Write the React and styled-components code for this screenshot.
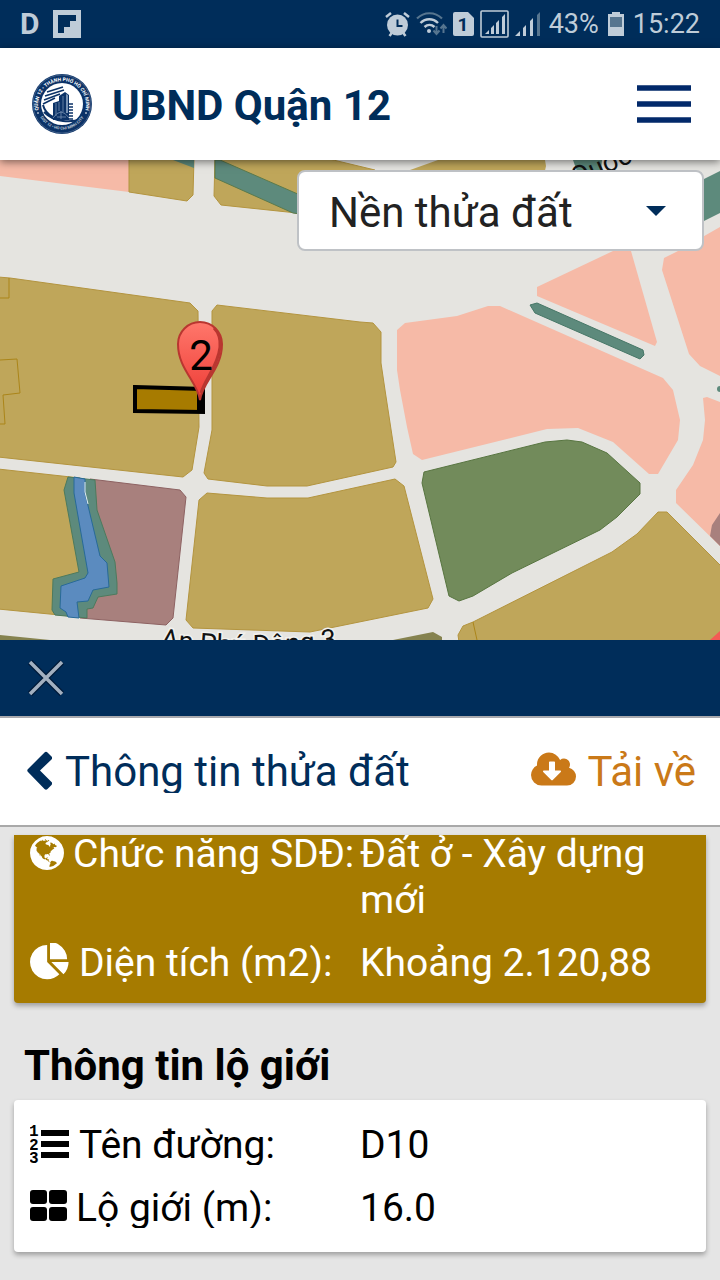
import { useState } from 'react';
import styled, { createGlobalStyle } from 'styled-components';

const GlobalStyle = createGlobalStyle`
  *,
  *::before,
  *::after {
    box-sizing: border-box;
  }
  body {
    margin: 0;
    background: #e5e5e5;
    font-family: Roboto, 'Liberation Sans', sans-serif;
    color: #000;
  }
  button,
  select {
    font: inherit;
    color: inherit;
  }
  svg {
    display: block;
    flex: none;
  }
`;

const Page = styled.div`
  display: flex;
  flex-direction: column;
  min-height: 100vh;
`;

const StatusBar = styled.div`
  display: flex;
  align-items: center;
  justify-content: space-between;
  height: 48px;
  padding: 0 20px;
  background: #002d5a;
  color: #bfccd8;
  font-size: 27px;
  line-height: 48px;
`;

const StatusGroup = styled.div`
  display: flex;
  align-items: center;
  gap: ${({ $gap }) => $gap}px;
`;

const Carrier = styled.span`
  font-size: 30px;
  font-weight: 700;
`;

const Header = styled.header`
  position: relative;
  z-index: 2;
  display: flex;
  align-items: center;
  gap: 20px;
  height: 112px;
  padding: 0 24px 0 32px;
  background: #fff;
  box-shadow: 0 2px 8px rgba(0, 0, 0, 0.5);
`;

const Brand = styled.h1`
  flex: 1;
  margin: 0;
  padding-top: 2px;
  color: #002d5a;
  font-size: 42px;
  font-weight: 700;
`;

const IconButton = styled.button`
  display: flex;
  padding: 0;
  border: 0;
  background: none;
  cursor: pointer;
`;

const MapArea = styled.section`
  position: relative;
  height: 480px;
  overflow: hidden;
  background: #e5e4e0;

  > svg {
    width: 100%;
    height: 100%;
  }
`;

const LayerPicker = styled.label`
  position: absolute;
  top: 10px;
  right: 16px;
  width: 407px;
  max-width: 90%;

  svg {
    position: absolute;
    top: 36px;
    right: 38px;
    pointer-events: none;
  }
`;

const LayerSelect = styled.select`
  appearance: none;
  display: block;
  width: 100%;
  height: 81px;
  padding: 4px 64px 0 30px;
  border: 2px solid #bfc2c6;
  border-radius: 8px;
  background: #fff;
  color: #222;
  font-size: 42px;
`;

const CloseBar = styled.div`
  display: flex;
  align-items: center;
  height: 76px;
  padding: 0 28px;
  background: #002d5a;
`;

const TitleBar = styled.div`
  display: flex;
  align-items: center;
  justify-content: space-between;
  height: 111px;
  padding: 0 24px 0 27px;
  border-top: 2px solid #a9a9ad;
  border-bottom: 2px solid #a9a9a9;
  background: #fff;
`;

const BarButton = styled.button`
  display: flex;
  align-items: center;
  gap: ${({ $gap }) => $gap}px;
  padding: 0;
  border: 0;
  background: none;
  color: ${({ $color }) => $color};
  font-size: 42px;
  line-height: 42px;
  cursor: pointer;
  overflow: hidden;
`;

const Clip = styled.span`
  overflow: hidden;
`;

const Details = styled.main`
  padding: 8px 14px 28px;
`;

const Card = styled.dl`
  margin: 0;
  padding: ${({ $scrolled }) => ($scrolled ? '0 16px 17px' : '22px 16px 21px')};
  border-radius: ${({ $scrolled }) => ($scrolled ? '0 0 4px 4px' : '4px')};
  background: ${({ $scrolled }) => ($scrolled ? '#a67b00' : '#fff')};
  color: ${({ $scrolled }) => ($scrolled ? '#fff' : '#000')};
  box-shadow: 0 3px 5px rgba(0, 0, 0, 0.3);
  overflow: hidden;
`;

const Rows = styled.div`
  display: flex;
  flex-direction: column;
  gap: 17px;
  margin-top: ${({ $offset }) => $offset || 0}px;
`;

const Row = styled.div`
  display: grid;
  grid-template-columns: 330px 1fr;
  align-items: start;
  font-size: 39px;
  line-height: 46px;
`;

const Label = styled.dt`
  display: flex;
  gap: 9px;
  margin-top: 3px;
  line-height: 40px;
  white-space: nowrap;
  overflow: hidden;
`;

const Value = styled.dd`
  margin: 0;
`;

const SectionTitle = styled.h2`
  margin: 38px 0 10px;
  padding-left: 10px;
  font-size: 42px;
  font-weight: 700;
  line-height: 49px;
`;

const FlipIcon = () => (
  <svg width="28" height="28" viewBox="0 0 28 28" aria-hidden="true">
    <path fill="#bfccd8" fillRule="evenodd" d="M0 0h28v28H0zM5 5v18h6v-6h6v-6h6V5z" />
  </svg>
);

const AlarmIcon = () => (
  <svg width="25" height="25" viewBox="0 0 25 25" aria-hidden="true">
    <circle cx="12.500" cy="13" r="10.500" fill="#bfccd8" />
    <path d="M1 5l5-4M24 5l-5-4M4.500 24l3-4M20.500 24l-3-4" stroke="#bfccd8" strokeWidth="2.500" fill="none" />
    <path d="M12.500 7.500v6.500h5" stroke="#002d5a" strokeWidth="2" fill="none" />
  </svg>
);

const WifiIcon = () => (
  <svg width="31" height="24" viewBox="0 0 31 24" fill="none" aria-hidden="true">
    <path d="M1 6.500C8-.5 19-.5 26 6.500" stroke="#56758f" strokeWidth="2.200" />
    <path d="M4.500 11c5-5 12.500-5 17.500 0M8.500 15c3-2.800 7-2.800 10 0" stroke="#bfccd8" strokeWidth="2.400" />
    <circle cx="13" cy="19" r="2" fill="#bfccd8" />
    <path d="M20.500 14v8M17.500 18.500l3 3.500 3-3.500M27.500 21v-8M24.500 16.500l3-3.500 3 3.500" stroke="#56758f" strokeWidth="2" />
  </svg>
);

const SimIcon = () => (
  <svg width="21" height="24" viewBox="0 0 21 24" aria-hidden="true">
    <path fill="#bfccd8" d="M2 0h13l6 6v16q0 2-2 2H2q-2 0-2-2V2q0-2 2-2z" />
    <text x="10" y="19" textAnchor="middle" fontFamily="Roboto" fontWeight="700" fontSize="19" fill="#002d5a">1</text>
  </svg>
);

const SignalBoxIcon = () => (
  <svg width="29" height="28" viewBox="0 0 29 28" aria-hidden="true">
    <rect x="1" y="1" width="27" height="26" rx="1" fill="none" stroke="#bfccd8" strokeWidth="1.600" />
    <path fill="#bfccd8" d="M5 24l4-4v4zM11 18l3-3v9h-3zM16 13l3-3v14h-3zM22 7l3-3v20h-3z" />
  </svg>
);

const SignalIcon = () => (
  <svg width="25" height="24" viewBox="0 0 25 24" aria-hidden="true">
    <path fill="#bfccd8" d="M0 24l5-5v5zM8 16l3-3v11H8zM15 9l3-3v18h-3z" />
    <path fill="#56758f" d="M22 3l3-3v24h-3z" />
  </svg>
);

const BatteryIcon = () => (
  <svg width="16" height="24" viewBox="0 0 16 24" aria-hidden="true">
    <path fill="#bfccd8" d="M4 0h8v2h4v22H0V2h4z" />
    <path fill="#56758f" d="M2 5h12v10H2z" />
  </svg>
);

const Seal = () => (
  <svg width="60" height="60" viewBox="0 0 60 60" role="img" aria-label="Quận 12">
    <defs>
      <path id="seal-top" d="M7 38A24 24 0 1 1 53 38" />
      <path id="seal-bottom" d="M8 43A25.500 25.500 0 0 0 52 43" />
    </defs>
    <circle cx="30" cy="30" r="30" fill="#0b3267" />
    <circle cx="30" cy="30" r="29" fill="none" stroke="#7189a7" strokeWidth="0.500" />
    <circle cx="30" cy="30" r="21" fill="#fff" />
    <g fill="none" stroke="#0b3267">
      <path d="M15 18l16-5M13 22l19-6M12 26l16-6M11 30l12-6" strokeWidth="1.600" />
      <path d="M12 38q8 8 19 9t18-2" strokeWidth="2" />
      <path d="M11 31q2 8 10 12" strokeWidth="2" />
    </g>
    <path fill="#0b3267" d="M21 29l6-2v-5l6-4 4 3v25H21z" />
    <path fill="#7893b4" d="M34 20l2 1v18h-2z" />
    <path stroke="#0b3267" strokeWidth="1.500" d="M36 30h5M36 33h5M36 36h5M36 39h5M36 42h5M36 45h5" />
    <path stroke="#7893b4" strokeWidth="0.800" fill="none" d="M24 29v13M27 28v9M31 22v16M21 44q8-12 16 0M29 37v8M25 43h9" />
    <g fill="#fff" fontFamily="Roboto" fontWeight="700">
      <text fontSize="5">
        <textPath href="#seal-top" startOffset="50%" textAnchor="middle">QUẬN 12 • THÀNH PHỐ HỒ CHÍ MINH</textPath>
      </text>
      <text fontSize="4" fill="#b9c6d5">
        <textPath href="#seal-bottom" startOffset="50%" textAnchor="middle">DIST 12 • HO CHI MINH CITY</textPath>
      </text>
    </g>
    <path stroke="#fff" strokeWidth="1" d="M5 39h2M53 39h2" />
  </svg>
);

const MenuIcon = () => (
  <svg width="64" height="40" viewBox="0 0 64 40" aria-hidden="true">
    <path d="M5 4h54M5 20h54M5 36h54" stroke="#02296a" strokeWidth="5.500" />
  </svg>
);

const CloseIcon = () => (
  <svg width="36" height="36" viewBox="0 0 36 36" aria-hidden="true">
    <path d="M2 2l32 32M34 2L2 34" stroke="#001a38" strokeWidth="6" />
    <path d="M2 2l32 32M34 2L2 34" stroke="#a3b0c0" strokeWidth="3.500" />
  </svg>
);

const BackIcon = () => (
  <svg width="25" height="42" viewBox="0 0 25 42" fill="currentColor" aria-hidden="true">
    <path d="M1 18L17.500 1.500q1.500-1.500 3 0l4 4q1.500 1.500 0 3L13 19.500l11.500 11.500q1.500 1.500 0 3l-4 4q-1.500 1.500-3 0L1 21q-1.500-1.500 0-3z" />
  </svg>
);

const DownloadIcon = () => (
  <svg width="45" height="42" viewBox="-64 60 1920 1792" fill="currentColor" aria-hidden="true">
    <path d="M1216 928q0-14-9-23t-23-9h-224v-352q0-13-9.500-22.500t-22.500-9.500h-192q-13 0-22.500 9.500t-9.500 22.500v352h-224q-13 0-22.500 9.500t-9.500 22.500q0 14 9 23l352 352q9 9 23 9t23-9l351-351q10-12 10-24zm640 224q0 159-112.500 271.500t-271.500 112.500h-1088q-185 0-316.500-131.500t-131.500-316.500q0-130 70-240t188-165q-2-30-2-43 0-212 150-362t362-150q156 0 285.500 87t188.500 231q71-62 166-62 106 0 181 75t75 181q0 76-41 138 130 31 213.500 135.500t83.500 238.500z" />
  </svg>
);

const GlobeIcon = () => (
  <svg width="34" height="40" viewBox="128 40 1536 1792" fill="currentColor" aria-hidden="true">
    <path d="M896 128q209 0 385.500 103t279.500 279.500 103 385.500-103 385.500-279.500 279.500-385.500 103-385.500-103-279.500-279.500-103-385.500 103-385.500 279.500-279.500 385.500-103zm274 521q-2 1-9.500 9.500t-13.500 9.500q2 0 4.500-5t5-11 3.500-7q6-7 22-15 14-6 52-12 34-8 51 11-2-2 9.500-13t14.500-12q3-2 15-4.500t15-7.500l2-22q-12 1-17.500-7t-6.500-21q0 2-6 8 0-7-4.500-8t-11.500 1-9 1q-10-3-15-7.500t-8-16.500-4-15q-2-5-9.500-11t-9.500-10q-1-2-2.500-5.500t-3-6.500-4-5.500-5.500-2.500-7 5-7.500 10-4.500 5q-3-2-6-1.500t-4.500 1-4.500 3-5 3.500q-3 2-8.500 3t-8.500 2q15-5-1-11-10-4-16-3 9-4 7.500-12t-8.500-14h5q-1-4-8.500-8.500t-17.500-8.500-13-6q-8-5-34-9.500t-33-.5q-5 6-4.500 10.500t4 14 3.500 12.500q1 6-5.500 13t-6.500 12q0 7 14 15.500t10 21.500q-3 8-16 16t-16 12q-5 8-1.500 18.500t10.500 16.500q2 2 1.500 4t-3.500 4.500-5.500 4-6.500 3.500l-3 2q-11 5-20.500-6t-13.500-26q-7-25-16-30-23-8-29 1-5-13-41-26-25-9-58-4 6-1 0-15-7-15-19-12 3-6 4-17.500t1-13.500q3-13 12-23 1-1 7-8.500t9.500-13.500.5-6q35 4 50-11 5-5 11.500-17t10.500-17q9-6 14-5.500t14.500 5.500 14.500 5q14 1 15.500-11t-7.500-20q12 1 3-17-4-7-8-9-12-4-27 5-8 4 2 8-1-1-9.500 10.500t-16.500 17.500-16-5q-1-1-5.500-13.500t-9.500-13.500q-8 0-16 15 3-8-11-15t-24-8q19-12-8-27-7-4-20.500-5t-19.500 4q-5 7-5.500 11.500t5 8 10.500 5.500 11.500 4 8.500 3q14 10 8 14-2 1-8.500 3.500t-11.500 4.500-6 4q-3 4 0 14t-2 14q-5-5-9-17.500t-7-16.500q7 9-25 6l-10-1q-4 0-16 2t-20.500 1-13.500-8q-4-8 0-20 1-4 4-2-4-3-11-9.500t-10-8.500q-46 15-94 41 6 1 12-1 5-2 13-6.500t10-5.500q34-14 42-7l5-5q14 16 20 25-7-4-30-1-20 6-22 12 7 12 5 18-4-3-11.500-10t-14.500-11-15-5q-16 0-22 1-146 80-235 222 7 7 12 8 4 1 5 9t2.500 11 11.500-3q9 8 3 19 1-1 44 27 19 17 21 21 3 11-10 18-1-2-9-9t-9-4q-3 5 .5 18.500t10.500 12.500q-7 0-9.500 16t-2.500 35.500-1 23.500l2 1q-3 12 5.500 34.500t21.500 19.500q-13 3 20 43 6 8 8 9 3 2 12 7.500t15 10 10 10.500q4 5 10 22.500t14 23.500q-2 6 9.500 20t10.500 23q-1 0-2.500 1t-2.500 1q3 7 15.500 14t15.500 13q1 3 2 10t3 11 8 2q2-20-24-62-15-25-17-29-3-5-5.500-15.500t-4.500-14.500q2 0 6 1.500t8.500 3.500 7.500 4 2 3q-3 7 2 17.500t12 18.500 17 19 12 13q6 6 14 19.500t0 13.500q9 0 20 10.500t17 19.500q5 8 8 26t5 24q2 7 8.500 13.500t12.500 9.500l16 8 13 7q5 2 18.500 10.500t21.500 11.500q10 4 16 4t14.500-2.500 13.500-3.500q15-2 29 15t21 21q36 19 55 11-2 1 .5 7.500t8 15.500 9 14.500 5.500 8.500q5 6 18 15t18 15q6-4 7-9-3 8 7 20t18 10q14-3 14-32-31 15-49-18 0-1-2.500-5.500t-4-8.500-2.500-8.500 0-7.500 5-3q9 0 10-3.500t-2-12.500-4-13q-1-8-11-20t-12-15q-5 9-16 8t-16-9q0 1-1.500 5.500t-1.500 6.500q-13 0-15-1 1-3 2.500-17.500t3.500-22.500q1-4 5.500-12t7.500-14.500 4-12.500-4.500-9.500-17.500-2.500q-19 1-26 20-1 3-3 10.500t-5 11.500-9 7q-7 3-24 2t-24-5q-13-8-22.500-29t-9.500-37q0-10 2.500-26.500t3-25-5.500-24.500q3-2 9-9.500t10-10.500q2-1 4.500-1.500t4.500 0 4-1.500 3-6q-1-1-4-3-3-3-4-3 7 3 28.500-1.500t27.500 1.500q15 11 22-2 0-1-2.500-9.500t-.5-13.500q5 27 29 9 3 3 15.500 5t17.500 5q3 2 7 5.500t5.500 4.500 5-.5 8.500-6.500q10 14 12 24 11 40 19 44 7 3 11 2t4.500-9.500 0-14-1.500-12.500l-1-8v-18l-1-8q-15-3-18.500-12t1.500-18.500 15-18.500q1-1 8-3.500t15.500-6.500 12.500-8q21-19 15-35 7 0 11-9-1 0-5-3t-7.500-5-4.500-2q9-5 2-16 5-3 7.500-11t7.500-10q9 12 21 2 7-8 1-16 5-7 20.500-10.500t18.500-9.500q7 2 8-2t1-12 3-12q4-5 15-9t13-5l17-11q3-4 0-4 18 2 31-11 10-11-6-20 3-6-3-9.500t-15-5.500q3-1 11.500-.5t10.500-1.500q15-10-7-16-17-5-43 12zm-163 877q206-36 351-189-3-3-12.500-4.500t-12.500-3.500q-18-7-24-8 1-7-2.500-13t-8-9-12.500-8-11-7q-2-2-7-6t-7-5.500-7.500-4.500-8.500-2-10 1l-3 1q-3 1-5.500 2.500t-5.500 3-4 3 0 2.500q-21-17-36-22-5-1-11-5.500t-10.500-7-10-1.500-11.500 7q-5 5-6 15t-2 13q-7-5 0-17.500t2-18.500q-3-6-10.500-4.500t-12 4.500-11.500 8.500-9 6.500-8.500 5.500-8.500 7.500q-3 4-6 12t-5 11q-2-4-11.500-6.500t-9.500-5.500q2 10 4 35t5 38q7 31-12 48-27 25-29 40-4 22 12 26 0 7-8 20.500t-7 21.500q0 6 2 16z" />
  </svg>
);

const PieIcon = () => (
  <svg width="40" height="40" viewBox="0 40 1792 1792" fill="currentColor" overflow="visible" aria-hidden="true">
    <path d="M768 890l546 546q-106 108-247.500 168t-298.500 60q-209 0-385.500-103t-279.500-279.500-103-385.500 103-385.500 279.500-279.500 385.500-103v762zm187 6h773q0 157-60 298.500t-168 247.500zm709-128h-768v-768q209 0 385.500 103t279.500 279.500 103 385.500z" />
  </svg>
);

const ListIcon = () => (
  <svg width="40" height="40" viewBox="0 0 40 40" fill="currentColor" aria-hidden="true">
    <path d="M11 5h28v6H11zM11 16h28v6H11zM11 27h28v6H11z" />
    <g fontFamily="Liberation Mono" fontWeight="700" fontSize="16">
      <text x="-1" y="11">1</text>
      <text x="-1" y="25">2</text>
      <text x="-1" y="38">3</text>
    </g>
  </svg>
);

const GridIcon = () => (
  <svg width="37" height="40" viewBox="0 0 37 40" fill="currentColor" aria-hidden="true">
    <rect x="0" y="2" width="17" height="14" rx="3" />
    <rect x="19" y="2" width="18" height="14" rx="3" />
    <rect x="0" y="19" width="17" height="14" rx="3" />
    <rect x="19" y="19" width="18" height="14" rx="3" />
  </svg>
);

const GOLD = '#bfa65a';
const PINK = '#f6baa7';
const TEAL = '#5d8a7c';
const MAUVE = '#a8807d';

const parcels = [
  { fill: PINK, points: '0,0 129,0 129,32 0,16' },
  { fill: GOLD, stroke: '#b3943f', points: '129,-2 194,-2 193,35 187,41 129,32' },
  { fill: TEAL, points: '173,0 194,0 194,8' },
  { fill: GOLD, stroke: '#b3943f', points: '215,-2 325,-2 375,10 375,56 297,53 221,45 214,36' },
  { fill: TEAL, stroke: '#5a7a4d', points: '215,0 220,0 300,35 300,54 293,53 215,18' },
  { fill: GOLD, points: '410,10 438,0 545,0 546,6 543,20 410,20' },
  { fill: TEAL, points: '573,0 602,0 600,20 580,20' },
  { fill: TEAL, points: '700,21 720,11 720,53 700,63' },
  { fill: PINK, points: '678,91 720,67 720,216 700,206 689,194 662,110 664,98' },
  { fill: PINK, points: '537,127 613,91 631,91 657,182 655,186 537,136' },
  { fill: TEAL, stroke: '#477767', points: '530,145 537,143 643,190 644,195 640,199 535,153' },
  {
    fill: PINK,
    points:
      '405,163 457,156 488,146 500,146 663,218 673,230 680,260 678,280 658,314 649,314 613,282 578,268 547,269 422,300 413,294 407,267 400,230 397,210 397,170',
  },
  { fill: PINK, points: '703,238 707,237 720,242 720,386 676,343 676,330 693,305 703,280 705,260' },
  { fill: MAUVE, points: '720,353 712,365 710,376 720,386' },
  {
    fill: '#728b5b',
    stroke: '#587541',
    points:
      '424,312 545,282 567,280 582,282 607,293 640,323 640,334 617,357 600,370 512,413 473,436 459,441 449,436 422,323',
  },
  { fill: GOLD, stroke: '#b3943f', points: '658,352 667,352 722,407 722,482 459,482 458,475 463,466 473,462 612,392 637,374' },
  { fill: '#f45b55', points: '710,480 720,471 720,480' },
  { fill: '#85824f', points: '393,480 433,472 442,477 442,480' },
  { fill: '#85824f', points: '0,475 50,480 0,480' },
  { fill: GOLD, stroke: '#b3943f', points: '-2,117 10,118 190,143 198,151 199,267 192,310 183,317 -2,297' },
  {
    fill: GOLD,
    stroke: '#b3943f',
    points:
      '217,145 360,162 373,163 381,172 381,203 385,230 396,302 393,307 307,326 267,326 208,319 204,313 212,270 212,151',
  },
  {
    fill: GOLD,
    stroke: '#b3943f',
    points: '207,333 267,338 308,338 395,319 404,326 433,439 428,448 310,472 193,468 186,460 199,340',
  },
  { fill: GOLD, stroke: '#b3943f', points: '-2,309 80,318 80,457 -2,449' },
  { fill: MAUVE, stroke: '#8d6262', points: '90,319 180,330 186,337 173,458 166,465 80,458' },
  {
    fill: TEAL,
    stroke: '#4d7a5d',
    points:
      '68,317 95,320 97,350 115,402 117,423 117,434 98,437 93,448 87,449 87,458 55,455 52,450 53,419 79,412 64,330',
  },
  {
    fill: '#5b8bbf',
    stroke: '#286a98',
    points:
      '74,317 85,319 85,333 100,396 107,403 109,427 93,430 88,441 77,442 79,458 68,457 66,452 60,448 61,426 85,418 88,413 74,333',
  },
];

const ParcelMap = () => (
  <svg viewBox="0 0 720 480" preserveAspectRatio="xMidYMid slice" role="img" aria-label="Bản đồ thửa đất">
    <defs>
      <linearGradient id="pin" x1="0" y1="0" x2="0" y2="1">
        <stop offset="0" stopColor="#ff776b" />
        <stop offset="1" stopColor="#ee3c36" />
      </linearGradient>
      <path id="street" d="M160 487Q252 502 345 486" />
    </defs>
    {parcels.map(({ fill, stroke, points }) => (
      <polygon key={points} points={points} fill={fill} stroke={stroke || 'none'} strokeWidth="1" />
    ))}
    <path
      d="M9 118v20H0M0 200l17-1 3 34-17 2 2 29H0M473 462l4 18"
      fill="none"
      stroke="#ab8519"
      strokeWidth="1"
    />
    <path d="M85 322v10l3 12" stroke="#e9f1f3" fill="none" />
    <circle cx="720" cy="229" r="3" fill={TEAL} />
    <polygon points="135,227 203,229 203,252 135,251" fill="#a77b00" stroke="#000" strokeWidth="4" />
    <path d="M199 229v23" stroke="#000" strokeWidth="4" />
    <g
      fill="#111"
      stroke="#f2f1ee"
      strokeWidth="3"
      paintOrder="stroke"
      fontFamily="Roboto"
      fontSize="27"
    >
      <text>
        <textPath href="#street">An Phú Đông 3</textPath>
      </text>
      <text transform="translate(576 27) rotate(-24)" stroke="none">Quốc</text>
    </g>
    <path
      d="M200 240C197 221 178 209 178 184a22 22 0 0 1 44 0C222 209 203 221 200 240z"
      fill="url(#pin)"
      stroke="#b93630"
      strokeWidth="2"
    />
    <path d="M214 168Q221 175 220 187C218 206 205 219 201 233" fill="none" stroke="#b93630" strokeWidth="3" />
    <text x="201" y="210" textAnchor="middle" fontFamily="Roboto" fontSize="42">
      2
    </text>
  </svg>
);

const landUse = [
  { Icon: GlobeIcon, label: 'Chức năng SDĐ:', value: 'Đất ở - Xây dựng mới' },
  { Icon: PieIcon, label: 'Diện tích (m2):', value: 'Khoảng 2.120,88' },
];

const roadInfo = [
  { Icon: ListIcon, label: 'Tên đường:', value: 'D10' },
  { Icon: GridIcon, label: 'Lộ giới (m):', value: '16.0' },
];

const InfoCard = ({ items, scrolled }) => (
  <Card $scrolled={scrolled}>
    <Rows $offset={scrolled ? -4 : 0}>
      {items.map(({ Icon, label, value }) => (
        <Row key={label}>
          <Label>
            <Icon />
            {label}
          </Label>
          <Value>{value}</Value>
        </Row>
      ))}
    </Rows>
  </Card>
);

const App = () => {
  const [layer, setLayer] = useState('parcel');

  return (
    <>
      <GlobalStyle />
      <Page>
        <StatusBar>
          <StatusGroup $gap={13}>
            <Carrier>D</Carrier>
            <FlipIcon />
          </StatusGroup>
          <StatusGroup $gap={9}>
            <StatusGroup $gap={6}>
              <AlarmIcon />
              <WifiIcon />
              <SimIcon />
              <SignalBoxIcon />
              <SignalIcon />
            </StatusGroup>
            <span>43%</span>
            <BatteryIcon />
            <span>15:22</span>
          </StatusGroup>
        </StatusBar>
        <Header>
          <Seal />
          <Brand>UBND Quận 12</Brand>
          <IconButton type="button" aria-label="Menu">
            <MenuIcon />
          </IconButton>
        </Header>
        <MapArea>
          <ParcelMap />
          <LayerPicker>
            <LayerSelect
              aria-label="Lớp bản đồ"
              value={layer}
              onChange={e => setLayer(e.target.value)}
            >
              <option value="parcel">Nền thửa đất</option>
            </LayerSelect>
            <svg width="20" height="10" viewBox="0 0 20 10" aria-hidden="true">
              <path d="M0 0h20L10 10z" fill="#002d5a" />
            </svg>
          </LayerPicker>
        </MapArea>
        <CloseBar>
          <IconButton type="button" aria-label="Đóng">
            <CloseIcon />
          </IconButton>
        </CloseBar>
        <TitleBar>
          <BarButton type="button" $color="#002d5a" $gap={13}>
            <BackIcon />
            <Clip>Thông tin thửa đất</Clip>
          </BarButton>
          <BarButton type="button" $color="#ca7918" $gap={11}>
            <DownloadIcon />
            <Clip>Tải về</Clip>
          </BarButton>
        </TitleBar>
        <Details>
          <InfoCard items={landUse} scrolled />
          <SectionTitle>Thông tin lộ giới</SectionTitle>
          <InfoCard items={roadInfo} />
        </Details>
      </Page>
    </>
  );
};

export default App;
